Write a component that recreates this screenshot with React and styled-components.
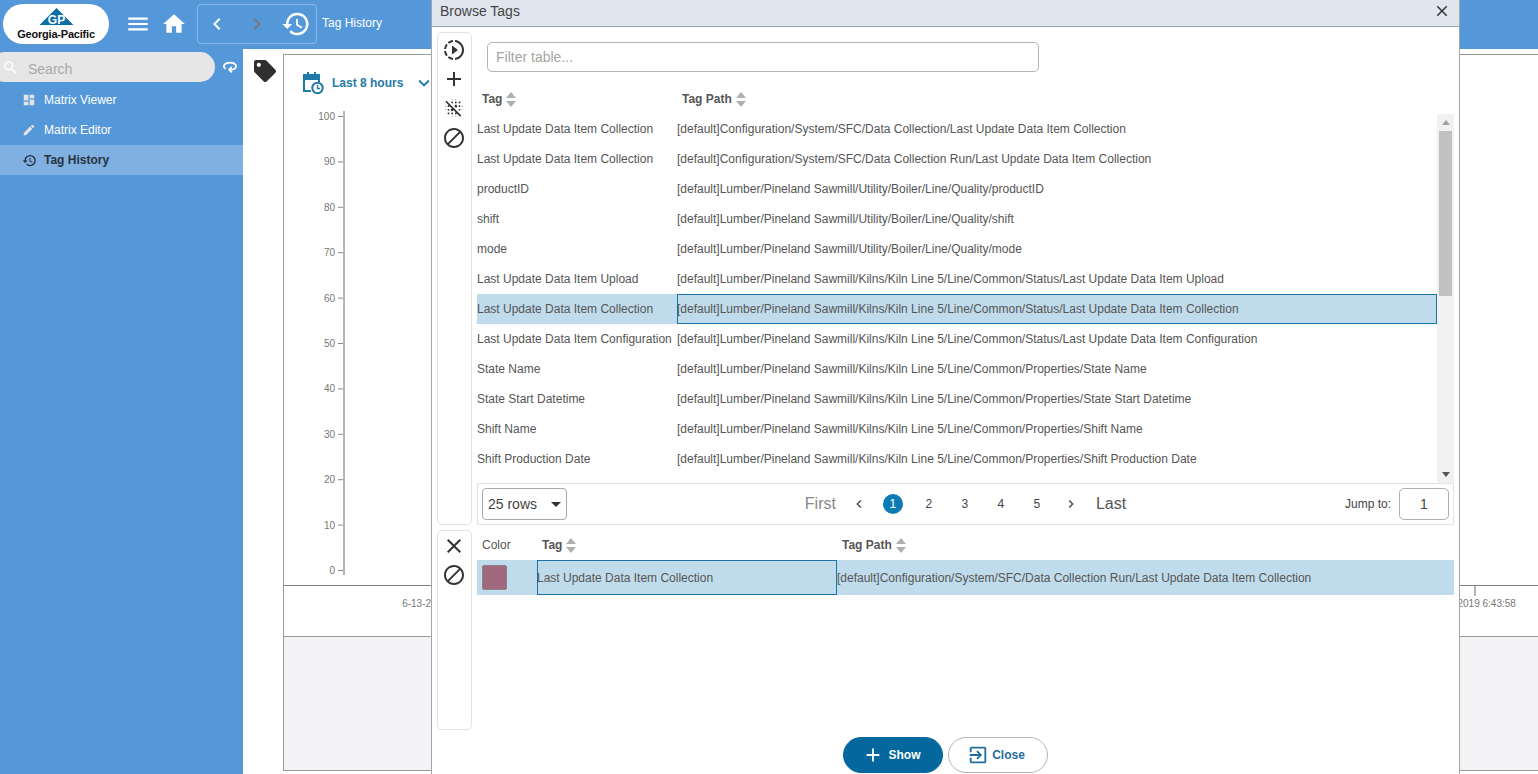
import React from 'react';
import styled, { createGlobalStyle } from 'styled-components';
import {
  MdAdd, MdBlock, MdBlurOff, MdChevronLeft, MdChevronRight, MdClose, MdDashboard, MdEdit,
  MdExitToApp, MdExpandMore, MdHistory, MdHome, MdMenu, MdSearch, MdSlowMotionVideo,
} from 'react-icons/md';
import { FaTag } from 'react-icons/fa';

const GlobalStyle = createGlobalStyle`
  html, body { margin: 0; padding: 0; overflow: hidden; }
  body { font-family: "Liberation Sans", Arial, sans-serif; }
  * { box-sizing: border-box; }
`;

const Page = styled.div`
  position: relative;
  width: 1538px;
  height: 774px;
  overflow: hidden;
  background: #fff;
`;

// Header
const Header = styled.header`
  display: flex;
  align-items: center;
  height: 49px;
  padding: 0 3px 1px;
  background: #5598da;
  color: #fff;
`;
const LogoPill = styled.div`
  display: flex;
  align-items: center;
  justify-content: center;
  width: 106px;
  height: 40px;
  border-radius: 20px;
  background: #fff;
`;
const HeaderIcon = styled.div`
  display: flex;
  width: ${p => p.$w}px;
  margin-left: ${p => p.$ml}px;
  justify-content: center;
  color: ${p => p.$color || '#fff'};
`;
const NavGroup = styled.div`
  display: flex;
  align-items: center;
  width: 120px;
  height: 40px;
  margin-left: 10px;
  border: 1px solid #8fb7e4;
  border-radius: 4px;
`;
const PageTitle = styled.span`
  margin: 0 0 2px 5px;
  font-size: 12px;
`;

// Page body
const Body = styled.div`
  display: flex;
  height: 725px;
`;
const Sidebar = styled.aside`
  flex: none;
  width: 243px;
  padding-top: 3px;
  background: #5598da;
`;
const SearchRow = styled.div`
  display: flex;
  align-items: center;
  height: 30px;
  margin-bottom: 3px;
`;
const SearchPill = styled.div`
  display: flex;
  align-items: center;
  width: 225px;
  height: 30px;
  margin-left: -10px;
  padding-left: 12px;
  border-radius: 15px;
  background: #e6e6e6;
  color: #fff;
`;
const SearchText = styled.span`
  margin: 4px 0 0 9px;
  font-size: 14px;
  color: #a8a8a8;
`;
const NavItem = styled.div`
  display: flex;
  align-items: center;
  height: 30px;
  padding-left: 22px;
  font-size: 12px;
  font-weight: ${p => (p.$active ? 700 : 400)};
  color: ${p => (p.$active ? '#27333f' : '#fff')};
  background: ${p => (p.$active ? '#80b0e2' : 'transparent')};
  svg { color: ${p => (p.$active ? '#1d2b3a' : '#e4e4e4')}; }
`;
const NavLabel = styled.span`
  margin-left: ${p => p.$ml || 8}px;
`;

// Chart behind the dialog
const Main = styled.main`
  flex: 1;
  display: flex;
  min-width: 0;
  padding-top: 5px;
`;
const TagColumn = styled.div`
  flex: none;
  width: 40px;
  padding: 6px 0 0 11px;
  color: #2f2f31;
`;
const Frame = styled.div`
  flex: none;
  width: 1300px;
  height: 717px;
  border: 1px solid #9a9a9a;
  border-right: 0;
`;
const ChartPane = styled.div`
  height: 530px;
`;
const RangeBar = styled.div`
  display: flex;
  align-items: center;
  height: 55px;
  padding-left: 18px;
  color: #1f7aa8;
  font-size: 12px;
  font-weight: 700;
`;
const RangeLabel = styled.span`
  margin: 0 10px 0 8px;
`;
const XAxis = styled.div`
  display: flex;
  justify-content: space-between;
  height: 52px;
  padding: 0 67px 0 118px;
  border-top: 1px solid #808080;
  border-bottom: 1px solid #9a9a9a;
`;
const XTick = styled.div`
  display: flex;
  flex-direction: column;
  align-items: center;
  width: 82px;
  font-size: 10px;
  color: #777;
  &::before {
    content: "";
    width: 2px;
    height: 10px;
    margin-bottom: 2px;
    background: #b5b5b5;
  }
`;
const Overview = styled.div`
  height: 133px;
  background: #f3f3f5;
`;

// Dialog
const Dialog = styled.section`
  position: absolute;
  left: 431px;
  top: 0;
  width: 1029px;
  height: 790px;
  border: 1px solid #a6a6a6;
  border-top: 0;
  background: #fff;
  color: #555;
`;
const DialogTitle = styled.div`
  display: flex;
  align-items: center;
  justify-content: space-between;
  height: 27px;
  padding: 0 8px 4px 8px;
  border-bottom: 1px solid #9aa3ad;
  background: #dfe6ee;
  font-size: 14px;
  color: #444;
  svg { color: #333; }
`;
const Section = styled.div`
  display: flex;
  gap: 5px;
  height: ${p => p.$h}px;
  margin: ${p => p.$mt}px 5px 0;
`;
const ToolRail = styled.div`
  flex: none;
  width: 35px;
  padding: ${p => p.$pt || 0}px 1px 0 0;
  border: 1px solid #e2e2e2;
  border-radius: 5px;
`;
const ToolButton = styled.div`
  display: flex;
  align-items: center;
  justify-content: center;
  height: 29.3px;
  color: #333;
`;
const TableArea = styled.div`
  flex: 1;
  min-width: 0;
`;
const FilterInput = styled.div`
  display: flex;
  align-items: center;
  width: 552px;
  height: 30px;
  margin: 10px 0 0 10px;
  padding-left: 8px;
  border: 1px solid #b4b4b4;
  border-radius: 5px;
  font-size: 14px;
  color: #a5a5a5;
`;
const HeadRow = styled.div`
  display: flex;
  align-items: center;
  height: ${p => p.$h}px;
  margin-top: ${p => p.$mt || 0}px;
  font-size: 12px;
  font-weight: 700;
  color: #555;
`;
const HeadCell = styled.div`
  display: flex;
  align-items: center;
  gap: 4px;
  width: ${p => p.$w}px;
  padding-left: 5px;
  font-weight: ${p => (p.$plain ? 400 : 700)};
`;
const SortIcon = styled.span`
  display: flex;
  flex-direction: column;
  gap: 3px;
  &::before, &::after {
    content: "";
    width: 0;
    height: 0;
    border-left: 5.5px solid transparent;
    border-right: 5.5px solid transparent;
  }
  &::before { border-bottom: 6px solid #b0b0b0; }
  &::after { border-top: 6px solid #b0b0b0; }
`;
const ScrollWrap = styled.div`
  display: flex;
  height: 369px;
  overflow: hidden;
`;
const Rows = styled.div`
  width: 960px;
`;
const Row = styled.div`
  display: flex;
  height: ${p => p.$h || 30}px;
  font-size: 12px;
`;
const Cell = styled.div`
  display: flex;
  align-items: center;
  flex: ${p => (p.$w ? 'none' : 1)};
  width: ${p => (p.$w ? `${p.$w}px` : 'auto')};
  white-space: nowrap;
  background: ${p => (p.$selected || p.$focus ? '#c0dcec' : 'transparent')};
  box-shadow: ${p => (p.$focus ? 'inset 0 0 0 1px #1a74a5' : 'none')};
`;
const Scrollbar = styled.div`
  display: flex;
  flex-direction: column;
  align-items: center;
  width: 17px;
  background: #f1f1f1;
`;
const ScrollArrow = styled.div`
  flex: none;
  display: flex;
  align-items: center;
  justify-content: center;
  height: 17px;
  &::before {
    content: "";
    border-left: 4px solid transparent;
    border-right: 4px solid transparent;
    ${p => (p.$down ? 'border-top: 5px solid #555;' : 'border-bottom: 5px solid #a3a3a3;')}
  }
`;
const ScrollThumb = styled.div`
  flex: none;
  width: 13px;
  height: 165px;
  background: #c1c1c1;
`;
const ScrollGap = styled.div`
  flex: 1;
`;
const Pager = styled.div`
  display: grid;
  grid-template-columns: 1fr auto 1fr;
  align-items: center;
  height: 42px;
  padding: 0 4px;
  border: 1px solid #e3e3e3;
`;
const RowsSelect = styled.div`
  display: flex;
  align-items: center;
  justify-content: space-between;
  width: 85px;
  height: 32px;
  padding: 0 5px;
  border: 1px solid #a8a8a8;
  border-radius: 4px;
  font-size: 14px;
  color: #444;
  &::after {
    content: "";
    border-left: 5px solid transparent;
    border-right: 5px solid transparent;
    border-top: 5px solid #333;
  }
`;
const PageLinks = styled.div`
  display: flex;
  align-items: center;
  font-size: 12px;
  color: #444;
`;
const EdgeLink = styled.span`
  font-size: 16px;
  color: ${p => (p.$dim ? '#888' : '#555')};
  margin: ${p => p.$m};
`;
const PageNum = styled.span`
  display: flex;
  align-items: center;
  justify-content: center;
  width: 20px;
  height: 20px;
  margin: 0 16px 0 ${p => (p.$on ? 16 : 0)}px;
  border-radius: 50%;
  color: ${p => (p.$on ? '#fff' : '#444')};
  background: ${p => (p.$on ? '#0c7bb3' : 'transparent')};
`;
const JumpBox = styled.div`
  display: flex;
  align-items: center;
  justify-content: flex-end;
  gap: 8px;
  font-size: 12px;
  color: #444;
`;
const JumpInput = styled.div`
  display: flex;
  align-items: center;
  justify-content: center;
  width: 50px;
  height: 32px;
  border: 1px solid #b0b0b0;
  border-radius: 5px;
  font-size: 14px;
`;
const Swatch = styled.span`
  width: 25px;
  height: 25px;
  margin-left: 5px;
  border: 1px solid #8f7f86;
  border-radius: 2px;
  background: #a0687c;
`;
const Footer = styled.div`
  display: flex;
  justify-content: center;
  gap: 5px;
  margin-top: 7px;
`;
const PillButton = styled.div`
  display: flex;
  align-items: center;
  justify-content: center;
  gap: ${p => (p.$primary ? 5 : 3)}px;
  width: 100px;
  height: 36px;
  padding-right: 4px;
  border-radius: 18px;
  font-size: 12px;
  font-weight: 700;
  color: ${p => (p.$primary ? '#fff' : '#1f6f9e')};
  background: ${p => (p.$primary ? '#04689e' : '#fff')};
  border: 1px solid ${p => (p.$primary ? '#04689e' : '#b4b4b4')};
`;

const browseRows = [
  ['Last Update Data Item Collection', '[default]Configuration/System/SFC/Data Collection/Last Update Data Item Collection'],
  ['Last Update Data Item Collection', '[default]Configuration/System/SFC/Data Collection Run/Last Update Data Item Collection'],
  ['productID', '[default]Lumber/Pineland Sawmill/Utility/Boiler/Line/Quality/productID'],
  ['shift', '[default]Lumber/Pineland Sawmill/Utility/Boiler/Line/Quality/shift'],
  ['mode', '[default]Lumber/Pineland Sawmill/Utility/Boiler/Line/Quality/mode'],
  ['Last Update Data Item Upload', '[default]Lumber/Pineland Sawmill/Kilns/Kiln Line 5/Line/Common/Status/Last Update Data Item Upload'],
  ['Last Update Data Item Collection', '[default]Lumber/Pineland Sawmill/Kilns/Kiln Line 5/Line/Common/Status/Last Update Data Item Collection'],
  ['Last Update Data Item Configuration', '[default]Lumber/Pineland Sawmill/Kilns/Kiln Line 5/Line/Common/Status/Last Update Data Item Configuration'],
  ['State Name', '[default]Lumber/Pineland Sawmill/Kilns/Kiln Line 5/Line/Common/Properties/State Name'],
  ['State Start Datetime', '[default]Lumber/Pineland Sawmill/Kilns/Kiln Line 5/Line/Common/Properties/State Start Datetime'],
  ['Shift Name', '[default]Lumber/Pineland Sawmill/Kilns/Kiln Line 5/Line/Common/Properties/Shift Name'],
  ['Shift Production Date', '[default]Lumber/Pineland Sawmill/Kilns/Kiln Line 5/Line/Common/Properties/Shift Production Date'],
];

const yTicks = [100, 90, 80, 70, 60, 50, 40, 30, 20, 10, 0];

const Logo = () => (
  <svg width="92" height="34" viewBox="0 0 92 34">
    <path d="M46.5 1 L63.5 18 L29.5 18 Z" fill="#0b6fa4" />
    <text x="46.5" y="17" textAnchor="middle" fontSize="12" fontWeight="700" fill="#fff" fontFamily="Liberation Sans">GP</text>
    <text x="46" y="31" textAnchor="middle" fontSize="11" fontWeight="700" fill="#111" fontFamily="Liberation Sans" letterSpacing="-0.2">Georgia-Pacific</text>
  </svg>
);

const LoopArrow = () => (
  <svg width="18" height="14" viewBox="0 0 18 14" fill="none" stroke="#fff" strokeWidth="2">
    <path d="M4 9 C0 6 3 2 9 2 C15 2 18 6 14 9 C13 10 11 10 9 10" />
    <path d="M11 7 L8 10 L11 13" />
  </svg>
);

const CalendarClock = () => (
  <svg width="22" height="24" viewBox="0 0 22 24" fill="none" stroke="#1f7aa8" strokeWidth="2">
    <path d="M9 20 H2 V4 H17 V11" />
    <path d="M2 5 H17 V8 H2 Z" fill="#1f7aa8" />
    <path d="M6 1 V5 M13 1 V5" />
    <circle cx="15.5" cy="17" r="5.2" fill="#fff" />
    <path d="M15.5 14 V17.5 H18" strokeWidth="1.4" />
  </svg>
);

const YAxis = () => (
  <svg width="70" height="470" viewBox="0 0 70 470">
    <rect x="59" y="1" width="2" height="464" fill="#b5b5b5" />
    {yTicks.map((t, i) => {
      const y = 6.5 + i * 45.4;
      return (
        <g key={t}>
          <rect x="54" y={y - 0.5} width="5" height="1" fill="#888" />
          <text x="51" y={y + 3.5} textAnchor="end" fontSize="10" fill="#777" fontFamily="Liberation Sans">{t}</text>
        </g>
      );
    })}
  </svg>
);

export default function App() {
  return (
    <Page>
      <GlobalStyle />
      <Header>
        <LogoPill><Logo /></LogoPill>
        <HeaderIcon $w={26} $ml={16}><MdMenu size={30} /></HeaderIcon>
        <HeaderIcon $w={26} $ml={10}><MdHome size={30} /></HeaderIcon>
        <NavGroup>
          <HeaderIcon $w={24} $ml={7}><MdChevronLeft size={30} /></HeaderIcon>
          <HeaderIcon $w={24} $ml={16} $color="#777"><MdChevronRight size={30} /></HeaderIcon>
          <HeaderIcon $w={30} $ml={12}><MdHistory size={32} /></HeaderIcon>
        </NavGroup>
        <PageTitle>Tag History</PageTitle>
      </Header>

      <Body>
        <Sidebar>
          <SearchRow>
            <SearchPill>
              <MdSearch size={17} />
              <SearchText>Search</SearchText>
            </SearchPill>
            <HeaderIcon $w={16} $ml={7}><LoopArrow /></HeaderIcon>
          </SearchRow>
          <NavItem><MdDashboard size={14} /><NavLabel>Matrix Viewer</NavLabel></NavItem>
          <NavItem><MdEdit size={14} /><NavLabel>Matrix Editor</NavLabel></NavItem>
          <NavItem $active><MdHistory size={15} /><NavLabel $ml={7}>Tag History</NavLabel></NavItem>
        </Sidebar>

        <Main>
          <TagColumn><FaTag size={22} /></TagColumn>
          <Frame>
            <ChartPane>
              <RangeBar>
                <CalendarClock />
                <RangeLabel>Last 8 hours</RangeLabel>
                <MdExpandMore size={22} />
              </RangeBar>
              <YAxis />
            </ChartPane>
            <XAxis>
              <XTick>6-13-2019 6:43:58</XTick>
              <XTick>6-13-2019 6:43:58</XTick>
            </XAxis>
            <Overview />
          </Frame>
        </Main>
      </Body>

      <Dialog>
        <DialogTitle>
          <span>Browse Tags</span>
          <MdClose size={18} />
        </DialogTitle>

        <Section $h={493} $mt={5}>
          <ToolRail $pt={2}>
            <ToolButton><MdSlowMotionVideo size={24} /></ToolButton>
            <ToolButton><MdAdd size={24} /></ToolButton>
            <ToolButton><MdBlurOff size={22} /></ToolButton>
            <ToolButton><MdBlock size={24} /></ToolButton>
          </ToolRail>
          <TableArea>
            <FilterInput>Filter table...</FilterInput>
            <HeadRow $h={30} $mt={12}>
              <HeadCell $w={200}>Tag <SortIcon /></HeadCell>
              <HeadCell>Tag Path <SortIcon /></HeadCell>
            </HeadRow>
            <ScrollWrap>
              <Rows>
                {browseRows.map(([tag, path], i) => (
                  <Row key={path}>
                    <Cell $w={200} $selected={i === 6}>{tag}</Cell>
                    <Cell $focus={i === 6}>{path}</Cell>
                  </Row>
                ))}
              </Rows>
              <Scrollbar>
                <ScrollArrow />
                <ScrollThumb />
                <ScrollGap />
                <ScrollArrow $down />
              </Scrollbar>
            </ScrollWrap>
            <Pager>
              <RowsSelect>25 rows</RowsSelect>
              <PageLinks>
                <EdgeLink $dim $m="0 15px 0 0">First</EdgeLink>
                <MdChevronLeft size={16} />
                <PageNum $on>1</PageNum>
                <PageNum>2</PageNum>
                <PageNum>3</PageNum>
                <PageNum>4</PageNum>
                <PageNum>5</PageNum>
                <MdChevronRight size={16} />
                <EdgeLink $m="0 0 0 17px">Last</EdgeLink>
              </PageLinks>
              <JumpBox>Jump to:<JumpInput>1</JumpInput></JumpBox>
            </Pager>
          </TableArea>
        </Section>

        <Section $h={200} $mt={5}>
          <ToolRail>
            <ToolButton><MdClose size={24} /></ToolButton>
            <ToolButton><MdBlock size={24} /></ToolButton>
          </ToolRail>
          <TableArea>
            <HeadRow $h={30}>
              <HeadCell $w={60} $plain>Color</HeadCell>
              <HeadCell $w={300}>Tag <SortIcon /></HeadCell>
              <HeadCell>Tag Path <SortIcon /></HeadCell>
            </HeadRow>
            <Row $h={35}>
              <Cell $w={60} $selected><Swatch /></Cell>
              <Cell $w={300} $focus>Last Update Data Item Collection</Cell>
              <Cell $selected>[default]Configuration/System/SFC/Data Collection Run/Last Update Data Item Collection</Cell>
            </Row>
          </TableArea>
        </Section>

        <Footer>
          <PillButton $primary><MdAdd size={22} />Show</PillButton>
          <PillButton><MdExitToApp size={22} />Close</PillButton>
        </Footer>
      </Dialog>
    </Page>
  );
}
